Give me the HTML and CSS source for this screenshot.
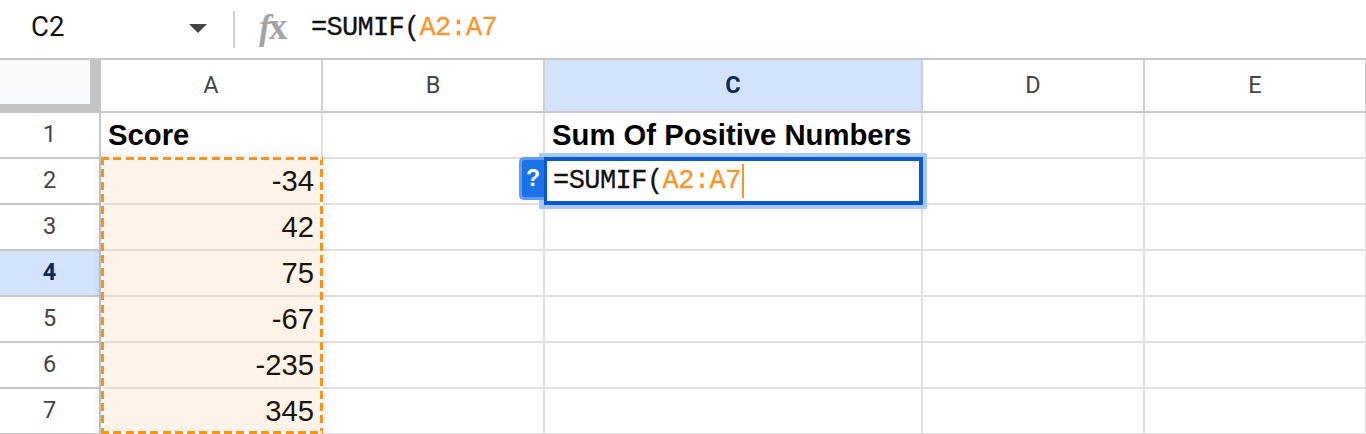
FILE: index.html
```html
<!doctype html>
<html lang="en">
<head>
    <meta charset="UTF-8">
    <title>SUMIF</title>
    <link rel="stylesheet" href="styles.css">
</head>
<body>
<div class="formula-bar">
    <div class="name-box">C2</div>
    <div class="name-arrow"></div>
    <div class="bar-divider"></div>
    <div class="fx"><span class="fx-f">f</span><span class="fx-x">x</span></div>
    <div class="formula">=SUMIF(<span class="ref">A2:A7</span></div>
</div>

<div class="sheet">
    <!-- header row -->
    <div class="corner"></div>
    <div class="col-head">A</div>
    <div class="col-head">B</div>
    <div class="col-head active">C</div>
    <div class="col-head">D</div>
    <div class="col-head">E</div>

    <div class="row-head">1</div>
    <div class="cell bold">Score</div>
    <div class="cell"></div>
    <div class="cell bold">Sum Of Positive Numbers</div>
    <div class="cell"></div>
    <div class="cell"></div>

    <div class="row-head">2</div>
    <div class="cell num picked">-34</div>
    <div class="cell"></div>
    <div class="cell"></div>
    <div class="cell"></div>
    <div class="cell"></div>

    <div class="row-head">3</div>
    <div class="cell num picked">42</div>
    <div class="cell"></div>
    <div class="cell"></div>
    <div class="cell"></div>
    <div class="cell"></div>

    <div class="row-head active">4</div>
    <div class="cell num picked">75</div>
    <div class="cell"></div>
    <div class="cell"></div>
    <div class="cell"></div>
    <div class="cell"></div>

    <div class="row-head">5</div>
    <div class="cell num picked">-67</div>
    <div class="cell"></div>
    <div class="cell"></div>
    <div class="cell"></div>
    <div class="cell"></div>

    <div class="row-head">6</div>
    <div class="cell num picked">-235</div>
    <div class="cell"></div>
    <div class="cell"></div>
    <div class="cell"></div>
    <div class="cell"></div>

    <div class="row-head">7</div>
    <div class="cell num picked">345</div>
    <div class="cell"></div>
    <div class="cell"></div>
    <div class="cell"></div>
    <div class="cell"></div>

    <!-- range + editor lie over the cells -->
    <div class="range"></div>
    <div class="editor">
        <div class="help">?</div>
        <div class="editor-text">=SUMIF(<span class="ref">A2:A7</span><span class="caret"></span></div>
    </div>
</div>
</body>
</html>
```

FILE: styles.css
```css
html, body {
    margin: 0;
    padding: 0;
    height: 434px;
    overflow: hidden;
    background: #fff;
    color: #000;
}

.formula-bar {
    height: 58px;
    display: flex;
    align-items: center;
    font-family: "Roboto", sans-serif;
}

.name-box {
    width: 189px;
    padding-left: 31px;
    margin-bottom: 6px;
    box-sizing: border-box;
    font-size: 27.5px;
    color: #111;
}

.name-arrow {
    width: 0;
    height: 0;
    margin-bottom: 2px;
    border-left: 9px solid transparent;
    border-right: 9px solid transparent;
    border-top: 9px solid #444;
}

.bar-divider {
    width: 2px;
    height: 37px;
    margin-left: 26px;
    background: #d0d0d0;
}

.fx {
    width: 52px;
    margin-left: 24px;
    margin-bottom: 6px;
    display: flex;
    align-items: baseline;
    font-family: "Liberation Serif", serif;
    font-weight: 700;
    color: #a3a3a3;
}

.fx-f {
    font-size: 35px;
    font-style: italic;
}

.fx-x {
    font-size: 37px;
    margin-left: -2px;
}

.formula {
    margin-bottom: 2px;
    font-family: "Liberation Mono", monospace;
    font-size: 27px;
    letter-spacing: -0.7px;
    -webkit-text-stroke: 0.3px #111;
    color: #111;
}

.ref {
    color: #f7962a;
    -webkit-text-stroke: 0.3px #f7962a;
}

.sheet {
    position: relative;
    display: grid;
    grid-template-columns: 101px 222px 222px 378px 222px 222px;
    grid-template-rows: 53px repeat(7, 46px);
    border-top: 2px solid #c7c7c7;
    font-family: "Liberation Sans", sans-serif;
}

.corner {
    background: #f8f9fa;
    border-right: 11px solid #c4c4c4;
    border-bottom: 9px solid #c4c4c4;
    box-sizing: border-box;
}

.col-head, .row-head {
    display: flex;
    align-items: center;
    justify-content: center;
    box-sizing: border-box;
    padding-bottom: 2px;
    font-family: "Roboto", sans-serif;
    font-size: 23.5px;
    color: #444;
}

.col-head {
    border-right: 2px solid #d0d0d0;
    border-bottom: 2px solid #c7c7c7;
}

.row-head {
    border-right: 2px solid #c7c7c7;
    border-bottom: 2px solid #c7c7c7;
}

.active {
    background: #d3e3fd;
    color: #0b2a5b;
    font-weight: 700;
}

.cell {
    box-sizing: border-box;
    border-right: 2px solid #e0e0e0;
    border-bottom: 2px solid #e0e0e0;
    padding: 0 7px;
    display: flex;
    align-items: center;
    font-size: 29.25px;
    white-space: nowrap;
    color: #000;
}

.bold {
    font-weight: 700;
}

.num {
    justify-content: flex-end;
}

.picked {
    background: #fdf3e9;
    border-bottom-color: #e5dcd3;
    color: #1c140c;
}

/* dashes are longer than the css dashed border gives */
.range {
    position: absolute;
    left: 101px;
    top: 97px;
    width: 222px;
    height: 277px;
    background:
        repeating-linear-gradient(90deg, #f4961e 0 8px, rgba(255, 255, 255, 0.7) 8px 12.3px) top left / 100% 3px no-repeat,
        repeating-linear-gradient(90deg, #f4961e 0 8px, rgba(255, 255, 255, 0.7) 8px 12.3px) bottom left / 100% 3px no-repeat,
        repeating-linear-gradient(180deg, #f4961e 0 8px, rgba(255, 255, 255, 0.7) 8px 12.3px) top left / 3px 100% no-repeat,
        repeating-linear-gradient(180deg, #f4961e 0 8px, rgba(255, 255, 255, 0.7) 8px 12.3px) top right / 3px 100% no-repeat;
    box-shadow: 0 0 10px rgba(0, 0, 0, 0.1);
}

.editor {
    position: absolute;
    left: 539px;
    top: 93px;
    width: 388px;
    height: 56px;
    box-sizing: border-box;
    border: 4px solid #a8c7fa;
    border-left-width: 5px;
}

.editor-text {
    box-sizing: border-box;
    height: 48px;
    border: 4px solid #0b57d0;
    border-left-width: 3px;
    background: #fff;
    padding-left: 6px;
    display: flex;
    align-items: center;
    font-family: "Liberation Mono", monospace;
    font-size: 27px;
    letter-spacing: -0.55px;
    -webkit-text-stroke: 0.3px #111;
    color: #111;
    white-space: pre;
}

.caret {
    width: 2px;
    height: 34px;
    background: #f7962a;
    margin-left: 1px;
}

.help {
    position: absolute;
    left: -25px;
    top: 0;
    width: 25px;
    height: 43px;
    box-sizing: border-box;
    background: #1a73e8;
    border: 3px solid #5f9bf0;
    border-right: 0;
    border-radius: 5px 0 0 5px;
    color: #fff;
    font: bold 23px "Liberation Sans", sans-serif;
    -webkit-text-stroke: 0;
    display: flex;
    align-items: center;
    justify-content: center;
}
```
